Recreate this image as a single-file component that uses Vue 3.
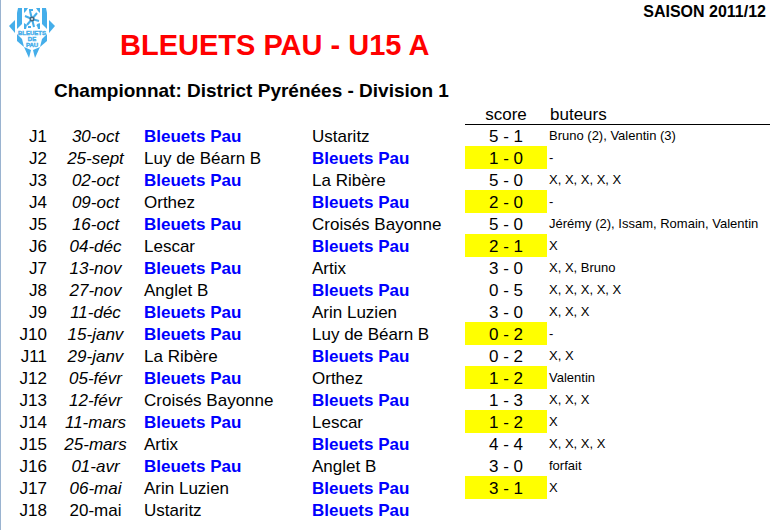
<script setup>
const club = 'Bleuets Pau'

const matches = [
  { day: 'J1', date: '30-oct', home: club, away: 'Ustaritz', score: '5 - 1', scorers: 'Bruno (2), Valentin (3)' },
  { day: 'J2', date: '25-sept', home: 'Luy de Béarn B', away: club, score: '1 - 0', scorers: '-', lost: true },
  { day: 'J3', date: '02-oct', home: club, away: 'La Ribère', score: '5 - 0', scorers: 'X, X, X, X, X' },
  { day: 'J4', date: '09-oct', home: 'Orthez', away: club, score: '2 - 0', scorers: '-', lost: true },
  { day: 'J5', date: '16-oct', home: club, away: 'Croisés Bayonne', score: '5 - 0', scorers: 'Jérémy (2), Issam, Romain, Valentin' },
  { day: 'J6', date: '04-déc', home: 'Lescar', away: club, score: '2 - 1', scorers: 'X', lost: true },
  { day: 'J7', date: '13-nov', home: club, away: 'Artix', score: '3 - 0', scorers: 'X, X, Bruno' },
  { day: 'J8', date: '27-nov', home: 'Anglet B', away: club, score: '0 - 5', scorers: 'X, X, X, X, X' },
  { day: 'J9', date: '11-déc', home: club, away: 'Arin Luzien', score: '3 - 0', scorers: 'X, X, X' },
  { day: 'J10', date: '15-janv', home: club, away: 'Luy de Béarn B', score: '0 - 2', scorers: '-', lost: true },
  { day: 'J11', date: '29-janv', home: 'La Ribère', away: club, score: '0 - 2', scorers: 'X, X' },
  { day: 'J12', date: '05-févr', home: club, away: 'Orthez', score: '1 - 2', scorers: 'Valentin', lost: true },
  { day: 'J13', date: '12-févr', home: 'Croisés Bayonne', away: club, score: '1 - 3', scorers: 'X, X, X' },
  { day: 'J14', date: '11-mars', home: club, away: 'Lescar', score: '1 - 2', scorers: 'X', lost: true },
  { day: 'J15', date: '25-mars', home: 'Artix', away: club, score: '4 - 4', scorers: 'X, X, X, X' },
  { day: 'J16', date: '01-avr', home: club, away: 'Anglet B', score: '3 - 0', scorers: 'forfait' },
  { day: 'J17', date: '06-mai', home: 'Arin Luzien', away: club, score: '3 - 1', scorers: 'X', lost: true },
  { day: 'J18', date: '20-mai', home: 'Ustaritz', away: club, score: '', scorers: '', upright: true },
]
</script>

<template>
  <main class="sheet">
    <header class="head">
      <svg class="logo" viewBox="0 0 48 50" role="img" aria-label="Bleuets de Pau">
        <g fill="#45aeea">
          <path d="M10 0H14V16L9 21V5z" />
          <path d="M34 0H38L39 5V21L34 16z" />
          <path d="M1 18L7 12V25z" />
          <path d="M47 18L41 12V25z" />
          <path d="M9 26L14 31L16 39L9 33z" />
          <path d="M39 26L34 31L32 39L39 33z" />
          <path d="M16 39L23 42L21 50z" />
          <path d="M32 39L25 42L27 50z" />
          <path d="M16 0H20L18 3L16 5z" />
          <path d="M28 0H32V5L30 3z" />
          <path d="M16 15L19 17L18 21H16z" />
          <path d="M32 15L29 17L30 21H32z" />
        </g>
        <g fill="none" stroke="#45aeea" stroke-width="2">
          <path d="M24 11L22 3" />
          <path d="M24 11L29 5" />
          <path d="M24 11L31 13" />
          <path d="M24 11L26 19" />
          <path d="M24 11L19 17" />
          <path d="M24 11L17 8" />
          <path d="M21 2H25M29 18L31 16M20 19H23" />
        </g>
        <circle cx="24" cy="11" r="2.500" fill="#46677e" />
        <circle cx="24" cy="11" r="1" fill="#e6edf2" />
        <g class="logo-text" text-anchor="middle">
          <text x="24" y="27">BLEUETS</text>
          <text x="24" y="33">DE</text>
          <text x="24" y="39">PAU</text>
        </g>
      </svg>
      <h1 class="title">BLEUETS PAU - U15 A</h1>
      <p class="season">SAISON 2011/12</p>
    </header>
    <h2 class="league">Championnat: District Pyrénées - Division 1</h2>
    <table class="results">
      <colgroup>
        <col class="c-day" />
        <col class="c-date" />
        <col class="c-team" />
        <col class="c-away" />
        <col class="c-score" />
        <col />
      </colgroup>
      <thead>
        <tr>
          <td colspan="4"></td>
          <th class="ruled" scope="col">score</th>
          <th class="ruled scorers-head" scope="col">buteurs</th>
        </tr>
      </thead>
      <tbody>
        <tr v-for="m in matches" :key="m.day">
          <td class="day">{{ m.day }}</td>
          <td class="date" :class="{ upright: m.upright }">{{ m.date }}</td>
          <td :class="{ club: m.home === club }">{{ m.home }}</td>
          <td :class="{ club: m.away === club }">{{ m.away }}</td>
          <td class="score" :class="{ lost: m.lost }">{{ m.score }}</td>
          <td class="scorers">{{ m.scorers }}</td>
        </tr>
      </tbody>
    </table>
  </main>
</template>

<style>
body {
  background: #fff;
}
</style>

<style scoped>
.sheet {
  box-sizing: border-box;
  min-height: 100vh;
  padding-right: 9px;
  border-left: 1px solid #9ab3d0;
  color: #000;
  font-family: "Liberation Sans", Arial, sans-serif;
  font-size: 17px;
  line-height: 20px;
}

.head {
  display: flex;
  align-items: flex-start;
  height: 78px;
}

.logo {
  width: 48px;
  height: 50px;
  margin: 8px 0 0 7px;
}

.logo-text {
  fill: #45aeea;
  stroke: #45aeea;
  stroke-width: 0.4px;
  font-size: 6px;
  font-weight: bold;
}

.title {
  flex: 1;
  margin: 28px 0 0 64px;
  color: #f00;
  font-size: 29px;
  line-height: 34px;
  white-space: nowrap;
}

.season {
  margin: 0;
  padding: 2px 4px 0 0;
  font-size: 16px;
  font-weight: bold;
}

.league {
  margin: 0 0 0 53px;
  font-size: 19px;
  line-height: 25px;
}

.results {
  width: 100%;
  table-layout: fixed;
  border-collapse: separate;
  border-spacing: 0;
}

.c-day {
  width: 46px;
}

.c-date {
  width: 97px;
}

.c-team {
  width: 168px;
}

.c-away {
  width: 153px;
}

.c-score {
  width: 82px;
}

th,
td {
  box-sizing: border-box;
  height: 22px;
  padding: 2px 0 0;
  white-space: nowrap;
}

th {
  font-weight: normal;
}

.ruled {
  border-bottom: 1px solid #000;
  line-height: 19px;
}

.scorers-head {
  padding-left: 3px;
  text-align: left;
}

.day {
  text-align: right;
}

.date {
  font-style: italic;
  text-align: center;
}

.upright {
  font-style: normal;
}

.club {
  color: #00f;
  font-weight: bold;
}

.score {
  text-align: center;
}

.lost {
  background: #ff0;
  box-shadow: 0 -1px #ff0;
}

.scorers {
  padding-left: 2px;
  font-size: 13px;
  line-height: 18px;
  vertical-align: top;
}
</style>
